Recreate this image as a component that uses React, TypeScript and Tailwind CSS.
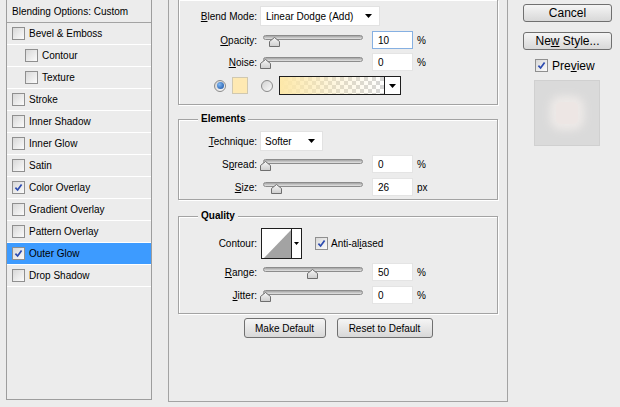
import React from "react";

type Layer = { name: string; sub?: boolean; checked?: boolean; active?: boolean };

const layers: Layer[] = [
  { name: "Bevel & Emboss" },
  { name: "Contour", sub: true },
  { name: "Texture", sub: true },
  { name: "Stroke" },
  { name: "Inner Shadow" },
  { name: "Inner Glow" },
  { name: "Satin" },
  { name: "Color Overlay", checked: true },
  { name: "Gradient Overlay" },
  { name: "Pattern Overlay" },
  { name: "Outer Glow", checked: true, active: true },
  { name: "Drop Shadow" },
];

function Check({ checked = false }: { checked?: boolean }) {
  return (
    <span className="flex h-[13px] w-[13px] shrink-0 items-center justify-center border border-[#8f8f8f] bg-gradient-to-br from-[#d8d8d8] to-[#fbfbfb]">
      {checked && (
        <svg width="9" height="9" viewBox="0 0 9 9">
          <path d="M1.4 4.6 L3.6 7 L7.6 1.4" fill="none" stroke="#2c4bb0" strokeWidth="1.7" />
        </svg>
      )}
    </span>
  );
}

function Caret() {
  return (
    <svg width="7" height="4" viewBox="0 0 7 4">
      <path d="M0 0H7L3.5 4Z" fill="#000" />
    </svg>
  );
}

// label text with its access key underlined
function Key({ text, at }: { text: string; at: number }) {
  return (
    <span className="whitespace-pre">
      {text.slice(0, at)}
      <span className="underline underline-offset-[1px]">{text[at]}</span>
      {text.slice(at + 1)}
    </span>
  );
}

function Slider({ pct }: { pct: number }) {
  return (
    <div className="relative ml-[6px] h-[18px] w-[100px] shrink-0">
      <div className="mt-[4px] h-[5px] rounded-full border border-[#8c8c8c] bg-gradient-to-b from-[#a4a4a4] to-[#e4e4e4]" />
      <svg
        className="absolute top-[6px]"
        style={{ left: 2 + pct * 0.94 - 5.5 }}
        width="11"
        height="10"
        viewBox="0 0 11 10"
      >
        <defs>
          <linearGradient id="th" x1="0" y1="0" x2="0" y2="1">
            <stop offset="0" stopColor="#f7f7f7" />
            <stop offset="1" stopColor="#cdcdcd" />
          </linearGradient>
        </defs>
        <path d="M0.5 4.5 L5.5 0.5 L10.5 4.5 L10.5 9.5 L0.5 9.5 Z" fill="url(#th)" stroke="#6e6e6e" />
      </svg>
    </div>
  );
}

function Field({ value, unit, focus = false }: { value: string; unit: string; focus?: boolean }) {
  return (
    <>
      <div
        className={`ml-[9px] flex h-[18px] w-[41px] shrink-0 items-center bg-white pl-[5px] border ${
          focus ? "border-[#86b0e2]" : "border-[#e4e4e4]"
        }`}
      >
        {value}
      </div>
      <span className="ml-[4px]">{unit}</span>
    </>
  );
}

function Label({ children }: { children: React.ReactNode }) {
  return <span className="w-[78px] shrink-0 text-right">{children}</span>;
}

function GroupTitle({ children }: { children: React.ReactNode }) {
  return (
    <span className="absolute -top-[8px] left-[19px] bg-[#ececec] px-[3px] font-bold leading-[13px]">
      {children}
    </span>
  );
}

function Radio({ on = false }: { on?: boolean }) {
  return (
    <span className="flex h-[12px] w-[12px] shrink-0 items-center justify-center rounded-full border border-[#8a8a8a] bg-gradient-to-br from-[#d2d2d2] to-[#fafafa]">
      {on && <span className="h-[7px] w-[7px] rounded-full bg-[radial-gradient(circle_at_35%_35%,#7fb8f5,#144c9e)]" />}
    </span>
  );
}

const groupBox =
  "relative border border-[#a3a3a3] shadow-[inset_1px_1px_0_#fff,1px_1px_0_#fff]";

const btn =
  "flex items-center justify-center rounded-[3px] border border-[#707070] bg-gradient-to-b from-[#f5f5f5] to-[#d8d8d8]";

export default function App() {
  return (
    <div className="flex h-[407px] w-[620px] items-start overflow-hidden bg-[#ececec] font-['Liberation_Sans',Arial,sans-serif] text-[10px] text-black">
      {/* Styles list */}
      <div className="ml-[6px] flex h-[400px] w-[146px] shrink-0 flex-col border-x border-b border-[#9d9d9d]">
        <div className="flex h-[23px] items-center border-b border-[#a3a3a3] pl-[5px]">
          Blending Options: Custom
        </div>
        {layers.map((l) => (
          <div
            key={l.name}
            className={`flex h-[22px] items-center gap-[4px] border-b border-white ${
              l.sub ? "pl-[18px]" : "pl-[5px]"
            } ${l.active ? "bg-[#3d9bff]" : ""}`}
          >
            <Check checked={l.checked} />
            <span>{l.name}</span>
          </div>
        ))}
      </div>

      {/* Options */}
      <div className="ml-[16px] flex h-[402px] w-[340px] shrink-0 flex-col border-x border-b border-[#a3a3a3] px-[9px]">
        {/* Structure */}
        <div className={`${groupBox} h-[105px] border-t-0 pt-[6px]`}>
          <div className="flex h-[20px] items-center">
            <Label>
              <Key text="Blend Mode:" at={0} />
            </Label>
            <div className="ml-[3px] flex h-[20px] w-[120px] items-center justify-between border border-[#e2e2e2] bg-white pl-[5px] pr-[7px]">
              <span>Linear Dodge (Add)</span>
              <Caret />
            </div>
          </div>
          <div className="mt-[5px] flex h-[18px] items-center">
            <Label>
              <Key text="Opacity:" at={0} />
            </Label>
            <Slider pct={10} />
            <Field value="10" unit="%" focus />
          </div>
          <div className="mt-[4px] flex h-[18px] items-center">
            <Label>
              <Key text="Noise:" at={0} />
            </Label>
            <Slider pct={0} />
            <Field value="0" unit="%" />
          </div>
          <div className="mt-[5px] flex h-[19px] items-center pl-[35px]">
            <Radio on />
            <span className="ml-[6px] h-[17px] w-[16px] border border-[#d0c8b0] bg-[#fee9b2]" />
            <span className="ml-[13px]">
              <Radio />
            </span>
            <div className="ml-[6px] flex h-[19px] w-[122px] border border-[#1e1e1e]">
              <div className="flex-1 bg-[image:conic-gradient(#d6d6d6_25%,#ffffff_0_50%,#d6d6d6_0_75%,#ffffff_0)] bg-[length:8px_8px]">
                <div className="h-full w-full bg-[linear-gradient(to_right,#fde8a9,rgba(253,232,169,0.35)_55%,rgba(253,232,169,0))]" />
              </div>
              <div className="flex w-[16px] items-center justify-center border-l border-[#1e1e1e] bg-white">
                <Caret />
              </div>
            </div>
          </div>
        </div>

        {/* Elements */}
        <div className={`${groupBox} mt-[14px] h-[81px] pt-[11px]`}>
          <GroupTitle>Elements</GroupTitle>
          <div className="flex h-[20px] items-center">
            <Label>
              <Key text="Technique:" at={0} />
            </Label>
            <div className="ml-[3px] flex h-[20px] w-[63px] items-center justify-between border border-[#e2e2e2] bg-white pl-[4px] pr-[7px]">
              <span>Softer</span>
              <Caret />
            </div>
          </div>
          <div className="mt-[4px] flex h-[18px] items-center">
            <Label>
              <Key text="Spread:" at={1} />
            </Label>
            <Slider pct={0} />
            <Field value="0" unit="%" />
          </div>
          <div className="mt-[5px] flex h-[18px] items-center">
            <Label>
              <Key text="Size:" at={0} />
            </Label>
            <Slider pct={12} />
            <Field value="26" unit="px" />
          </div>
        </div>

        {/* Quality */}
        <div className={`${groupBox} mt-[16px] h-[98px] pt-[11px]`}>
          <GroupTitle>Quality</GroupTitle>
          <div className="flex h-[31px] items-center">
            <Label>Contour:</Label>
            <div className="ml-[4px] flex h-[31px] w-[41px] border border-[#1e1e1e] bg-white">
              <svg width="29" height="29" viewBox="0 0 29 29" className="shrink-0">
                <path d="M2 29 L29 1 L29 29 Z" fill="#a3a3a3" />
              </svg>
              <div className="flex flex-1 items-center justify-center border-l border-[#1e1e1e]">
                <svg width="5" height="3" viewBox="0 0 5 3">
                  <path d="M0 0H5L2.5 3Z" fill="#000" />
                </svg>
              </div>
            </div>
            <span className="ml-[13px] flex items-center gap-[3px]">
              <Check checked />
              <Key text="Anti-aliased" at={7} />
            </span>
          </div>
          <div className="mt-[4px] flex h-[18px] items-center">
            <Label>
              <Key text="Range:" at={0} />
            </Label>
            <Slider pct={50} />
            <Field value="50" unit="%" />
          </div>
          <div className="mt-[5px] flex h-[18px] items-center">
            <Label>
              <Key text="Jitter:" at={0} />
            </Label>
            <Slider pct={0} />
            <Field value="0" unit="%" />
          </div>
        </div>

        <div className="mt-[4px] flex justify-center gap-[11px]">
          <button className={`${btn} h-[20px] w-[82px]`}>Make Default</button>
          <button className={`${btn} h-[20px] w-[96px]`}>Reset to Default</button>
        </div>
      </div>

      {/* Buttons + preview */}
      <div className="ml-[15px] flex w-[89px] shrink-0 flex-col pt-[4px] text-[12px]">
        <button className={`${btn} h-[18px]`}>Cancel</button>
        <button className={`${btn} mt-[10px] h-[18px]`}>
          <Key text="New Style..." at={2} />
        </button>
        <div className="mt-[9px] flex h-[13px] items-center gap-[4px] pl-[12px]">
          <Check checked />
          <Key text="Preview" at={3} />
        </div>
        <div className="ml-[11px] mt-[8px] flex h-[66px] w-[66px] items-center justify-center border border-[#d0d0d0] bg-[#dadada]">
          <div className="h-[22px] w-[22px] rounded-[5px] bg-[#ede6e4] shadow-[0_0_8px_6px_#eeeae8]" />
        </div>
      </div>
    </div>
  );
}
